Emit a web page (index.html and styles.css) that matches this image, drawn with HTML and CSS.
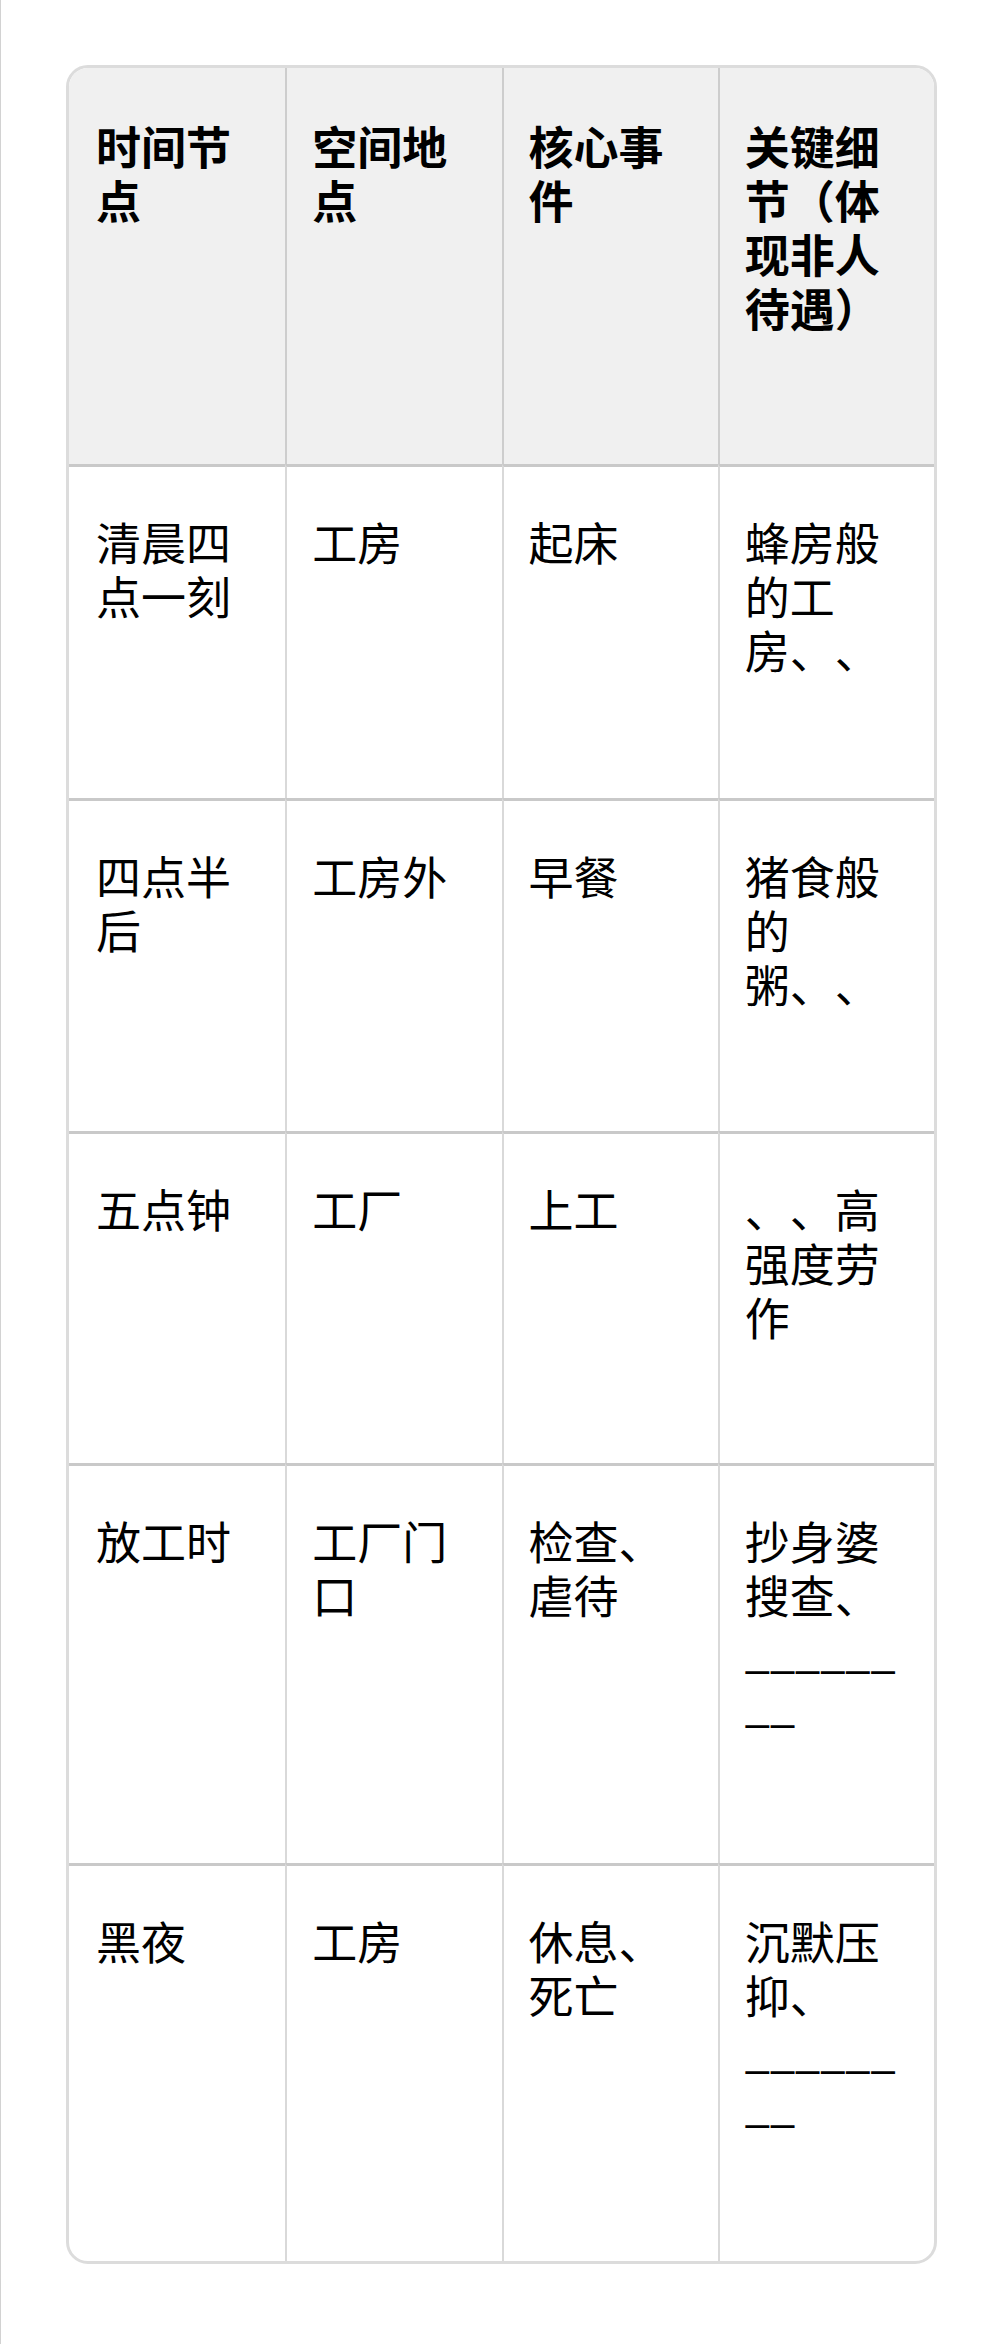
FILE: index.html
```html
<!DOCTYPE html>
<html lang="zh-CN">
<head>
<meta charset="utf-8">
<title>表格</title>
<link rel="stylesheet" href="styles.css">
</head>
<body>
<div class="page">
  <div class="table-wrap">
    <table class="grid">
      <thead>
        <tr class="row-head">
          <th>时间节点</th>
          <th>空间地点</th>
          <th>核心事件</th>
          <th>关键细节（体现非人待遇）</th>
        </tr>
      </thead>
      <tbody>
        <tr class="row-a">
          <td>清晨四点一刻</td>
          <td>工房</td>
          <td>起床</td>
          <td>蜂房般的工房、、</td>
        </tr>
        <tr class="row-b">
          <td>四点半后</td>
          <td>工房外</td>
          <td>早餐</td>
          <td>猪食般的粥、、</td>
        </tr>
        <tr class="row-c">
          <td>五点钟</td>
          <td>工厂</td>
          <td>上工</td>
          <td>、、高强度劳作</td>
        </tr>
        <tr class="row-d">
          <td>放工时</td>
          <td>工厂门口</td>
          <td>检查、虐待</td>
          <td>抄身婆搜查、________</td>
        </tr>
        <tr class="row-e">
          <td>黑夜</td>
          <td>工房</td>
          <td>休息、死亡</td>
          <td>沉默压抑、________</td>
        </tr>
      </tbody>
    </table>
  </div>
</div>
</body>
</html>
```

FILE: styles.css
```css
html, body {
  margin: 0;
  padding: 0;
}

body {
  background: #ffffff;
  border-left: 1px solid #d2d2d2;
  min-height: 2344px;
  box-sizing: border-box;
  font-family: "Noto Sans CJK SC", "Noto Sans", sans-serif;
  color: #000000;
}

.page {
  padding: 65px 0 0 65px;
}

.table-wrap {
  width: 871px;
  box-sizing: border-box;
  border: 3px solid #dcdcdc;
  border-radius: 22px;
  overflow: hidden;
  background: #ffffff;
}

.grid {
  width: 100%;
  table-layout: fixed;
  border-collapse: separate;
  border-spacing: 0;
}

.grid th,
.grid td {
  vertical-align: top;
  text-align: left;
  font-size: 45px;
  line-height: 54px;
  padding: 51px 38px 0 25px;
  border-left: 2px solid #d9d9d9;
  overflow-wrap: anywhere;
  text-spacing-trim: space-all;
  font-kerning: none;
  font-feature-settings: "halt" 0, "palt" 0;
}

.grid th:first-child,
.grid td:first-child {
  border-left: none;
  padding-left: 27px;
}

.grid th {
  font-weight: 700;
  background: #f0f0f0;
  border-left-color: #cdcdcd;
}

.grid td {
  font-weight: 400;
  border-top: 3px solid #c9c9c9;
  padding-top: 48px;
}

.row-head { height: 396px; }
.row-a { height: 334px; }
.row-b { height: 333px; }
.row-c { height: 332px; }
.row-d { height: 400px; }
.row-e { height: 398px; }
```
